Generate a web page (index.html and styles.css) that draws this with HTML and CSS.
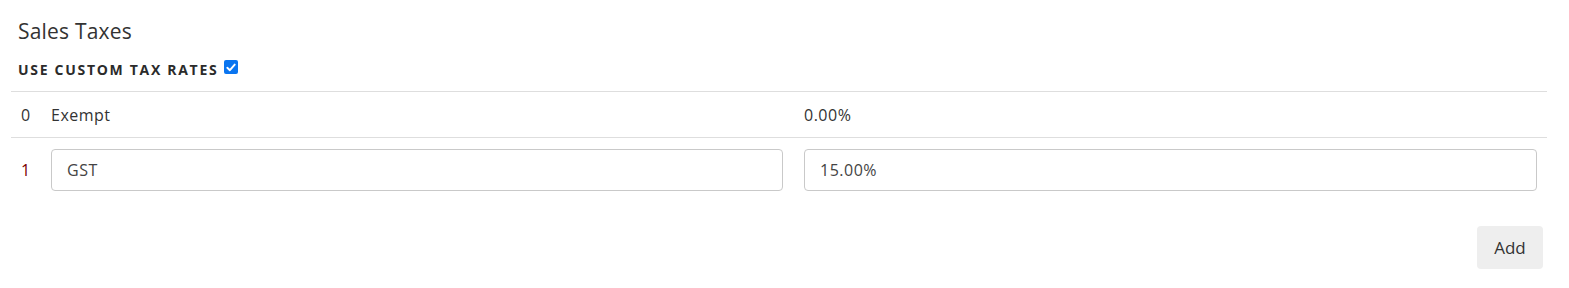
FILE: index.html
```html
<!DOCTYPE html>
<html>
<head>
<meta charset="utf-8">
<link rel="stylesheet" href="styles.css">
</head>
<body>
<div class="panel">
  <h2 class="title">Sales Taxes</h2>
  <div class="custom">
    <span class="custom-label">Use custom tax rates</span>
    <span class="check"><svg width="10" height="9" viewBox="0 0 10 9"><path d="M1.3 4.8 L3.9 7.2 L8.7 1.6" fill="none" stroke="#fff" stroke-width="1.9" stroke-linecap="round" stroke-linejoin="round"/></svg></span>
  </div>
  <div class="table">
    <div class="row row-static">
      <div class="cell num">0</div>
      <div class="cell name">Exempt</div>
      <div class="cell rate">0.00%</div>
    </div>
    <div class="row row-edit">
      <div class="cell num num-red">1</div>
      <div class="cell name"><div class="input">GST</div></div>
      <div class="cell rate"><div class="input">15.00%</div></div>
    </div>
  </div>
  <div class="actions">
    <button class="btn">Add</button>
  </div>
</div>
</body>
</html>
```

FILE: styles.css
```css
html, body {
  margin: 0;
  padding: 0;
  background: #fff;
}
body {
  font-family: "Open Sans", "Noto Sans", sans-serif;
  color: #333;
}
.panel {
  width: 1536px;
  padding: 0 0 0 11px;
}
.title {
  margin: 0;
  padding: 16px 0 0 7px;
  height: 30px;
  font-size: 21px;
  font-weight: 400;
  letter-spacing: 0.2px;
  line-height: 30px;
  color: #333;
}
.custom {
  display: flex;
  align-items: center;
  padding: 0 0 0 7px;
  height: 45px;
}
.custom-label {
  font-size: 14px;
  font-weight: 700;
  letter-spacing: 1.7px;
  text-transform: uppercase;
  color: #2b2b2b;
  margin-top: 2px;
}
.check {
  display: inline-flex;
  align-items: center;
  justify-content: center;
  width: 14px;
  height: 14px;
  margin-left: 6px;
  margin-top: -3px;
  border-radius: 2px;
  background: #0a75f0;
}
.table {
  border-top: 1px solid #dedede;
}
.row {
  display: grid;
  grid-template-columns: 30px 752px 754px;
}
.row-static {
  height: 45px;
  align-items: center;
  border-bottom: 1px solid #dedede;
}
.row-edit {
  padding: 11px 0 10px;
  align-items: center;
}
.cell {
  padding: 0 10px;
  font-size: 16px;
  letter-spacing: 0.5px;
}
.num {
  padding-right: 0;
}
.rate {
  padding-left: 11px;
}
.num-red {
  color: #7a0000;
}
.input {
  height: 40px;
  border: 1px solid #c9c9c9;
  border-radius: 4px;
  display: flex;
  align-items: center;
  padding: 0 15px;
  font-size: 16px;
  color: #444;
}
.actions {
  display: flex;
  justify-content: flex-end;
  padding: 25px 4px 0 0;
}
.btn {
  font-family: "Open Sans", "Noto Sans", sans-serif;
  font-size: 17px;
  color: #333;
  background: #eeeeee;
  border: none;
  border-radius: 4px;
  width: 66px;
  height: 43px;
}
```
